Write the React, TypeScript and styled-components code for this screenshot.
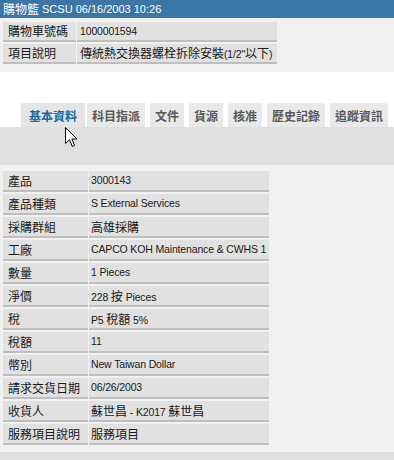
import React from "react";
import styled, { createGlobalStyle } from "styled-components";

const GlobalStyle = createGlobalStyle`
  body {
    margin: 0;
    background: #ffffff;
    font-family: "Liberation Sans", "Noto Sans CJK TC", sans-serif;
    font-size: 10.5px;
    color: #1a1a1a;
  }
`;

const Page = styled.div`
  width: 394px;
  height: 460px;
  overflow: hidden;
  position: relative;
  display: flex;
  flex-direction: column;
`;

const TitleBar = styled.div`
  height: 18px;
  background: #3b76a6;
  color: #ffffff;
  display: flex;
  align-items: center;
  gap: 3px;
  padding-left: 3px;
  line-height: 18px;
  font-size: 11px;
`;

const Cjk = styled.span`
  font-family: "Noto Sans CJK TC", sans-serif;
  font-size: 12px;
  letter-spacing: 0;
`;

const InfoBlock = styled.div`
  background: #f1f1f1;
  padding: 4px 0 8px 3px;
  display: flex;
  flex-direction: column;
  gap: 2px;
`;

const Row = styled.div<{ $label: number; $value: number }>`
  display: grid;
  grid-template-columns: ${(p) => p.$label}px ${(p) => p.$value}px;
  column-gap: 1px;
`;

const Cell = styled.div<{ $pad: number; $h: number }>`
  height: ${(p) => p.$h}px;
  line-height: ${(p) => p.$h}px;
  background: #e1e1e1;
  border-bottom: 2px solid #bfbfbf;
  padding-left: ${(p) => p.$pad}px;
  white-space: nowrap;
  overflow: hidden;
  letter-spacing: -0.15px;
`;

const Spacer = styled.div`
  height: 31px;
`;

const Tabs = styled.div`
  display: flex;
  align-items: stretch;
  height: 24px;
  padding-left: 21px;
  gap: 5px;
`;

const Tab = styled.div<{ $active?: boolean }>`
  display: flex;
  align-items: center;
  padding: 0 ${(p) => (p.$active ? 8 : 5)}px;
  margin-right: ${(p) => (p.$active ? -3 : 0)}px;
  background: ${(p) => (p.$active ? "#e4e4e4" : "#e9e9e9")};
  color: ${(p) => (p.$active ? "#1c6b9c" : "#5a5a5a")};
  font-weight: bold;
  font-family: "Noto Sans CJK TC", sans-serif;
  font-size: 12px;
`;

const Band = styled.div`
  height: 38px;
  background: #dfdfdf;
`;

const Panel = styled.div`
  background: #f1f1f1;
  padding: 6px 0 7px 3px;
  display: flex;
  flex-direction: column;
  gap: 2px;
`;

const Footer = styled.div`
  flex: 1;
  background: #dfdfdf;
`;

const Cursor = styled.svg`
  position: absolute;
  left: 65px;
  top: 127px;
`;

const cjkRun = /([\u2e80-\u9fff\uf900-\ufaff\uff00-\uffef]+)/;

function Mixed({ text }: { text: string }) {
  return (
    <>
      {text.split(cjkRun).map((part, i) =>
        cjkRun.test(part) ? <Cjk key={i}>{part}</Cjk> : <span key={i}>{part}</span>
      )}
    </>
  );
}

const header = [
  ["購物車號碼", "1000001594"],
  ["項目說明", '傳統熱交換器螺栓拆除安裝(1/2"以下)'],
];

const details = [
  ["產品", "3000143"],
  ["產品種類", "S External Services"],
  ["採購群組", "高雄採購"],
  ["工廠", "CAPCO KOH Maintenance & CWHS 1"],
  ["數量", "1 Pieces"],
  ["淨價", "228 按 Pieces"],
  ["稅", "P5 稅額 5%"],
  ["稅額", "11"],
  ["幣別", "New Taiwan Dollar"],
  ["請求交貨日期", "06/26/2003"],
  ["收貨人", "蘇世昌 - K2017 蘇世昌"],
  ["服務項目說明", "服務項目"],
];

const tabs = ["基本資料", "科目指派", "文件", "貨源", "核准", "歷史記錄", "追蹤資訊"];

export default function App() {
  return (
    <Page>
      <GlobalStyle />
      <TitleBar>
        <Cjk>購物籃</Cjk>
        <span>SCSU 06/16/2003 10:26</span>
      </TitleBar>
      <InfoBlock>
        {header.map(([label, value]) => (
          <Row key={label} $label={73} $value={200}>
            <Cell $pad={5} $h={18}>
              <Mixed text={label} />
            </Cell>
            <Cell $pad={3} $h={18}>
              <Mixed text={value} />
            </Cell>
          </Row>
        ))}
      </InfoBlock>
      <Spacer />
      <Tabs>
        {tabs.map((t, i) => (
          <Tab key={t} $active={i === 0}>
            {t}
          </Tab>
        ))}
      </Tabs>
      <Band />
      <Panel>
        {details.map(([label, value]) => (
          <Row key={label} $label={85} $value={180}>
            <Cell $pad={5} $h={19}>
              <Mixed text={label} />
            </Cell>
            <Cell $pad={2} $h={19}>
              <Mixed text={value} />
            </Cell>
          </Row>
        ))}
      </Panel>
      <Footer />
      <Cursor width="13" height="21" viewBox="0 0 13 21">
        <path
          d="M0.5 0.5 L0.5 16.5 L4.5 12.8 L7.3 19.5 L9.6 18.5 L6.9 12 L12 12 Z"
          fill="#ffffff"
          stroke="#000000"
          strokeWidth="1"
        />
      </Cursor>
    </Page>
  );
}
